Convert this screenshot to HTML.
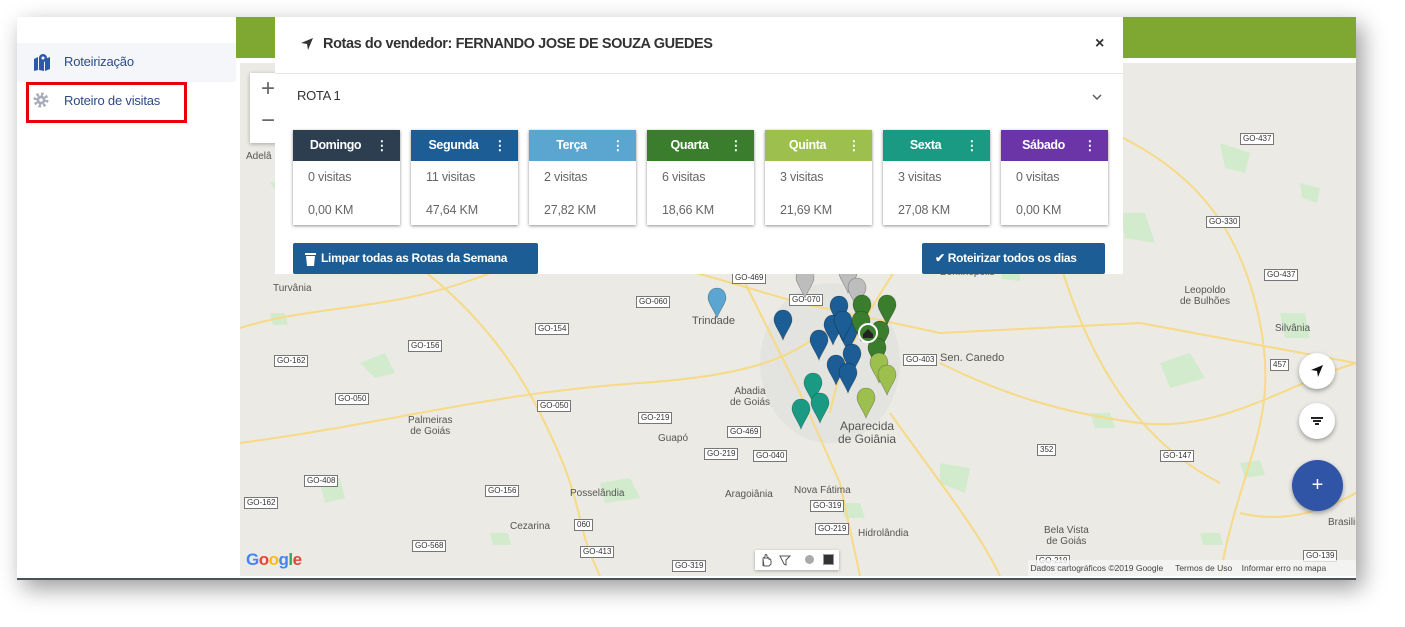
<!DOCTYPE html>
<html><head><meta charset="utf-8"><style>
body{margin:0;width:1405px;height:627px;background:#fff;position:relative;overflow:hidden;font-family:"Liberation Sans",sans-serif}
.frame{position:absolute;left:17px;top:17px;width:1339px;height:561px;background:#fff;box-shadow:6px 8px 22px rgba(0,0,0,.4);border-bottom:2px solid #4a5260}
.side{position:absolute;left:0;top:0;width:219px;height:561px;background:#fff}
.navsel{position:absolute;left:0;top:26px;width:219px;height:39px;background:#f5f6fa}
.nav{position:absolute;font-size:13px;color:#2d4a8a;letter-spacing:-.2px}
.green{position:absolute;left:219px;top:0;width:1120px;height:41px;background:#7fa832}
.map{position:absolute;left:223px;top:46px;width:1116px;height:513px;background:#ebeae4;overflow:hidden}
.modal{position:absolute;left:258px;top:0;width:848px;height:257px;background:#fff}
.card{position:absolute;top:113px;width:107px;height:95px;background:#fff;box-shadow:0 1px 3px rgba(0,0,0,.45)}
.card .h{height:31px;color:#fff;font-weight:bold;font-size:12.5px;letter-spacing:-.4px;line-height:31px;text-align:center;padding-right:22px;position:relative}
.card .h i{position:absolute;right:12px;top:0;font-style:normal;font-size:13px}
.card .v{font-size:12.5px;color:#666;padding:9px 0 0 15px;height:24px;letter-spacing:-.2px}
.card .k{font-size:12.5px;color:#666;padding:9px 0 0 15px;letter-spacing:-.2px}
.btn{position:absolute;top:226px;height:31px;background:#1b5d94;color:#fff;font-weight:bold;font-size:12px;letter-spacing:-.3px;line-height:31px;border-radius:2px}
.fab{position:absolute;border-radius:50%;background:#fff;box-shadow:0 2px 5px rgba(0,0,0,.35)}
.rl{position:absolute;font-size:8px;color:#333;background:#fff;border:1px solid #777;padding:0 2px;line-height:10px}
.tw{position:absolute;font-size:10px;color:#555}
</style></head><body>
<div class="frame">
 <div class="side">
  <div class="navsel"></div>
  <svg style="position:absolute;left:16px;top:36px" width="18" height="18" viewBox="0 0 18 18"><path d="M1 6l4-2v13l-4 1z M6 4l5 2v12l-5-1z M12 6l5-2v12l-5 2z" fill="#2d5aa8"/><circle cx="10" cy="5" r="4" fill="#2d5aa8"/><circle cx="10" cy="5" r="1.5" fill="#fff"/></svg>
  <div class="nav" style="left:47px;top:37px">Roteirização</div>
  <svg style="position:absolute;left:16px;top:75px" width="16" height="16" viewBox="0 0 16 16"><circle cx="8" cy="8" r="6" fill="none" stroke="#a7aab8" stroke-width="3" stroke-dasharray="2.4 2.3"/><circle cx="8" cy="8" r="4.5" fill="#a7aab8"/><circle cx="8" cy="8" r="1.8" fill="#fff"/></svg>
  <div class="nav" style="left:47px;top:76px">Roteiro de visitas</div>
  <div style="position:absolute;left:9px;top:65px;width:155px;height:35px;border:3px solid #e8000b"></div>
 </div>
 <div class="green"></div>
 <div class="map">
  <svg width="1116" height="513" style="position:absolute;left:0;top:0">
   <g fill="#d3ebcd">
    <path d="M30 120l20-5 10 15-15 10z"/><path d="M120 300l25-10 10 20-20 5z"/><path d="M220 40l20 3 5 15-20 0z"/><path d="M360 420l30-5 10 20-35 5z"/><path d="M700 400l30 5-5 25-25-10z"/><path d="M880 150l25 0 10 30-30-5z"/><path d="M980 80l30 10-5 20-20-5z"/><path d="M920 300l30-10 15 25-35 10z"/><path d="M600 440l20 0 5 15-20 0z"/><path d="M80 420l20-5 5 20-20 5z"/><path d="M1040 250l25 0 5 25-25 0z"/><path d="M450 180l15 0 5 15-15 3z"/><path d="M800 80l20 5 0 15-20-5z"/>
    <path d="M60 60l15 0 3 12-15 2z"/><path d="M300 150l15-3 5 12-15 3z"/><path d="M150 200l12 0 3 10-12 2z"/><path d="M760 200l20 3 0 15-18-2z"/><path d="M1060 120l20 5-3 15-15-5z"/><path d="M850 350l20 0 5 15-20 0z"/><path d="M1000 400l20-3 5 15-20 3z"/><path d="M250 470l18 0 3 12-18 0z"/><path d="M690 60l15 0 3 12-15 0z"/><path d="M960 470l20 0 3 12-20 0z"/><path d="M30 250l15 0 3 12-15 0z"/><path d="M400 100l15 0 3 12-15 0z"/>
   </g>
   <g fill="#e3e3e0"><ellipse cx="590" cy="300" rx="70" ry="80"/></g>
   <g fill="none" stroke="#f7da86" stroke-width="2">
    <path d="M0 265 C80 240 150 250 250 210 S 420 200 560 240 L700 270 900 260 1116 300"/>
    <path d="M480 170 L520 250 560 330 600 420 620 513"/>
    <path d="M760 0 C720 80 700 140 660 200 S 600 300 590 350"/>
    <path d="M0 380 C150 360 250 330 400 320 S 560 280 600 260"/>
    <path d="M850 60 C950 100 1000 160 1020 260 S 1000 400 980 513"/>
    <path d="M820 200 C850 300 900 380 980 420"/>
    <path d="M100 150 C180 200 250 250 300 350 S 330 450 360 513"/>
    <path d="M700 300 C760 330 820 350 900 360 S 1050 320 1116 300"/>
    <path d="M650 350 C700 420 740 470 760 513"/>
    <path d="M1000 450 C1040 460 1080 450 1116 430"/>
   </g>
  </svg>
  <div style="position:absolute;left:10px;top:10px;width:36px;height:70px;background:#fff;box-shadow:0 1px 4px rgba(0,0,0,.3);font-size:24px;color:#666;text-align:center;line-height:32px">+<br>−</div>
  <div class="tw" style="left:6px;top:88px">Adelâ</div>
  <div class="tw" style="left:33px;top:220px">Turvânia</div>
  <div class="tw" style="left:452px;top:252px;font-size:11px">Trindade</div>
  <div class="tw" style="left:490px;top:323px;text-align:center">Abadia<br>de Goiás</div>
  <div class="tw" style="left:168px;top:352px;text-align:center">Palmeiras<br>de Goiás</div>
  <div class="tw" style="left:598px;top:357px;font-size:12px;text-align:center;line-height:13px">Aparecida<br>de Goiânia</div>
  <div class="tw" style="left:700px;top:289px;font-size:11px">Sen. Canedo</div>
  <div class="tw" style="left:700px;top:204px">Bonfinópolis</div>
  <div class="tw" style="left:940px;top:222px;text-align:center">Leopoldo<br>de Bulhões</div>
  <div class="tw" style="left:1035px;top:260px">Silvânia</div>
  <div class="tw" style="left:330px;top:425px">Posselândia</div>
  <div class="tw" style="left:270px;top:458px">Cezarina</div>
  <div class="tw" style="left:485px;top:426px">Aragoiânia</div>
  <div class="tw" style="left:554px;top:422px">Nova Fátima</div>
  <div class="tw" style="left:618px;top:465px">Hidrolândia</div>
  <div class="tw" style="left:418px;top:370px">Guapó</div>
  <div class="tw" style="left:804px;top:462px;text-align:center">Bela Vista<br>de Goiás</div>
  <div class="tw" style="left:1088px;top:454px">Brasilinh</div>
  <div class="rl" style="left:492px;top:209px">GO-469</div><div class="rl" style="left:549px;top:231px">GO-070</div>
  <div class="rl" style="left:396px;top:233px">GO-060</div><div class="rl" style="left:295px;top:260px">GO-154</div>
  <div class="rl" style="left:168px;top:277px">GO-156</div><div class="rl" style="left:34px;top:292px">GO-162</div>
  <div class="rl" style="left:95px;top:330px">GO-050</div><div class="rl" style="left:297px;top:337px">GO-050</div>
  <div class="rl" style="left:398px;top:349px">GO-219</div><div class="rl" style="left:487px;top:363px">GO-469</div>
  <div class="rl" style="left:464px;top:385px">GO-219</div><div class="rl" style="left:513px;top:387px">GO-040</div>
  <div class="rl" style="left:64px;top:412px">GO-408</div><div class="rl" style="left:245px;top:422px">GO-156</div>
  <div class="rl" style="left:4px;top:434px">GO-162</div><div class="rl" style="left:172px;top:477px">GO-568</div>
  <div class="rl" style="left:340px;top:483px">GO-413</div><div class="rl" style="left:570px;top:437px">GO-319</div>
  <div class="rl" style="left:575px;top:460px">GO-219</div><div class="rl" style="left:432px;top:497px">GO-319</div>
  <div class="rl" style="left:663px;top:291px">GO-403</div><div class="rl" style="left:1024px;top:206px">GO-437</div>
  <div class="rl" style="left:1000px;top:70px">GO-437</div><div class="rl" style="left:966px;top:153px">GO-330</div>
  <div class="rl" style="left:920px;top:387px">GO-147</div><div class="rl" style="left:1063px;top:487px">GO-139</div>
  <div class="rl" style="left:796px;top:492px">GO-219</div><div class="rl" style="left:797px;top:381px">352</div>
  <div class="rl" style="left:1030px;top:296px">457</div><div class="rl" style="left:334px;top:456px">060</div>
  <svg width="1116" height="513" style="position:absolute;left:0;top:0">
   <defs><path id="p" d="M0 0c-6 0-9 5-9 10 0 5 6 12 9 20 3-8 9-15 9-20 0-5-3-10-9-10z" stroke="rgba(0,0,0,.35)" stroke-width=".6"/></defs>
   <use href="#p" x="565" y="205" fill="#bdbdbd"/><use href="#p" x="608" y="200" fill="#bdbdbd"/><use href="#p" x="617" y="215" fill="#bdbdbd"/>
   <use href="#p" x="477" y="225" fill="#5aa6d0"/><use href="#p" x="543" y="247" fill="#1b5d94"/><use href="#p" x="599" y="233" fill="#1b5d94"/>
   <use href="#p" x="593" y="252" fill="#1b5d94"/><use href="#p" x="579" y="267" fill="#1b5d94"/><use href="#p" x="608" y="259" fill="#1b5d94"/>
   <use href="#p" x="612" y="281" fill="#1b5d94"/><use href="#p" x="596" y="292" fill="#1b5d94"/><use href="#p" x="608" y="300" fill="#1b5d94"/>
   <use href="#p" x="603" y="248" fill="#1b5d94"/>
   <use href="#p" x="622" y="232" fill="#3a7d2c"/><use href="#p" x="647" y="232" fill="#3a7d2c"/><use href="#p" x="621" y="248" fill="#3a7d2c"/>
   <use href="#p" x="640" y="258" fill="#3a7d2c"/><use href="#p" x="637" y="275" fill="#3a7d2c"/>
   <use href="#p" x="639" y="290" fill="#9dbf4e"/><use href="#p" x="647" y="302" fill="#9dbf4e"/><use href="#p" x="626" y="325" fill="#9dbf4e"/>
   <use href="#p" x="573" y="310" fill="#1a9a82"/><use href="#p" x="580" y="330" fill="#1a9a82"/><use href="#p" x="561" y="336" fill="#1a9a82"/>
   <circle cx="628" cy="270" r="9" fill="#3a7d2c" stroke="#fff" stroke-width="2"/><path d="M623 271l5-5 5 5v4h-10z" fill="#222"/>
  </svg>
  <div style="position:absolute;left:6px;top:487px;font-size:17px;font-weight:bold;color:#4285f4;letter-spacing:-.5px">G<span style="color:#ea4335">o</span><span style="color:#fbbc05">o</span>g<span style="color:#34a853">l</span><span style="color:#ea4335">e</span></div>
  <div style="position:absolute;left:515px;top:487px;width:84px;height:20px;background:#fff;box-shadow:0 1px 3px rgba(0,0,0,.3)"><svg style="position:absolute;left:4px;top:3px" width="14" height="14"><path d="M4 13V6M4 6c0-2 2-2 2 0V3c0-2 2-2 2 0v3c0-2 2-2 2 0v1c0-2 2-1 2 1v3l-2 2H5z" fill="none" stroke="#555" stroke-width="1"/></svg><svg style="position:absolute;left:24px;top:4px" width="12" height="12"><path d="M1 2l10 0-4 4 0 5-2-1z" fill="none" stroke="#555"/></svg><div style="position:absolute;left:50px;top:5px;width:9px;height:9px;border-radius:50%;background:#aaa"></div><div style="position:absolute;left:68px;top:4px;width:9px;height:9px;background:#333;border:1px solid #999"></div></div>
  <div style="position:absolute;left:788px;top:497px;width:328px;height:16px;background:rgba(245,245,245,.8);font-size:8.5px;color:#444;line-height:16px;white-space:nowrap">&nbsp;Dados cartográficos ©2019 Google&nbsp;&nbsp;&nbsp;&nbsp;&nbsp;Termos de Uso&nbsp;&nbsp;&nbsp;&nbsp;Informar erro no mapa</div>
  <div class="fab" style="left:1059px;top:290px;width:36px;height:36px"><svg width="36" height="36"><path d="M24 12L12 17l6 1 1 6z" fill="#111"/></svg></div>
  <div class="fab" style="left:1059px;top:340px;width:36px;height:36px"><div style="position:absolute;left:12px;top:14px;width:12px;height:1.5px;background:#222"></div><div style="position:absolute;left:14px;top:17px;width:8px;height:1.5px;background:#222"></div><div style="position:absolute;left:16px;top:20px;width:4px;height:1.5px;background:#222"></div></div>
  <div class="fab" style="left:1052px;top:397px;width:51px;height:51px;background:#3055a6;color:#fff;font-size:20px;text-align:center;line-height:50px">+</div>
 </div>
 <div class="modal">
  <svg style="position:absolute;left:25px;top:20px" width="14" height="14" viewBox="0 0 14 14"><path d="M13 1L1 6l6 1 1 6z" fill="#333"/></svg>
  <div style="position:absolute;left:48px;top:19px;font-size:14.5px;font-weight:bold;color:#333;letter-spacing:-.4px">Rotas do vendedor: FERNANDO JOSE DE SOUZA GUEDES</div>
  <div style="position:absolute;left:820px;top:18px;font-size:16px;font-weight:bold;color:#333">×</div>
  <div style="position:absolute;left:0;top:56px;width:848px;height:1px;background:#e6e6e6"></div>
  <div style="position:absolute;left:22px;top:71px;font-size:13px;color:#333;letter-spacing:-.3px">ROTA 1</div>
  <svg style="position:absolute;left:817px;top:77px" width="10" height="7"><path d="M1 1l4 4 4-4" stroke="#555" stroke-width="1.4" fill="none"/></svg>
  <div class="card" style="left:18px"><div class="h" style="background:#2c3e50">Domingo<i>⋮</i></div><div class="v">0 visitas</div><div class="k">0,00 KM</div></div>
  <div class="card" style="left:136px"><div class="h" style="background:#1b5d94">Segunda<i>⋮</i></div><div class="v">11 visitas</div><div class="k">47,64 KM</div></div>
  <div class="card" style="left:254px"><div class="h" style="background:#5aa6d0">Terça<i>⋮</i></div><div class="v">2 visitas</div><div class="k">27,82 KM</div></div>
  <div class="card" style="left:372px"><div class="h" style="background:#3a7d2c">Quarta<i>⋮</i></div><div class="v">6 visitas</div><div class="k">18,66 KM</div></div>
  <div class="card" style="left:490px"><div class="h" style="background:#9dbf4e">Quinta<i>⋮</i></div><div class="v">3 visitas</div><div class="k">21,69 KM</div></div>
  <div class="card" style="left:608px"><div class="h" style="background:#1a9a82">Sexta<i>⋮</i></div><div class="v">3 visitas</div><div class="k">27,08 KM</div></div>
  <div class="card" style="left:726px"><div class="h" style="background:#6b35a8">Sábado<i>⋮</i></div><div class="v">0 visitas</div><div class="k">0,00 KM</div></div>
  <div class="btn" style="left:18px;width:245px"><svg style="position:absolute;left:12px;top:9px" width="11" height="14"><path d="M0 1h11v2H0z M1 4h9l-1 10H2z" fill="#fff"/></svg><span style="position:absolute;left:28px">Limpar todas as Rotas da Semana</span></div>
  <div class="btn" style="left:647px;width:183px"><span style="position:absolute;left:13px">✔ Roteirizar todos os dias</span></div>
 </div>
</div>
</body></html>
